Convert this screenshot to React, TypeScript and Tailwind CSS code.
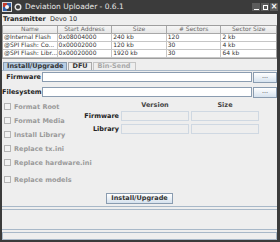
const rows = [
  ["@Internal Flash", "0x08004000", "240 kb", "120", "2 kb"],
  ["@SPI Flash: Co...", "0x00002000", "120 kb", "30", "4 kb"],
  ["@SPI Flash: Libr...", "0x00020000", "1920 kb", "30", "64 kb"],
];

const headers = ["Name", "Start Address", "Size", "# Sectors", "Sector Size"];

const options = [
  "Format Root",
  "Format Media",
  "Install Library",
  "Replace tx.ini",
  "Replace hardware.ini",
];

function Checkbox({ label }: { label: string }) {
  return (
    <div className="flex h-[14px] items-center gap-[3px] whitespace-nowrap pl-[1px]">
      <span className="h-[7px] w-[7px] shrink-0 border border-[#b4b4b4] bg-[#f2f2f2]" />
      <span className="font-bold text-[#9a9a9a]">{label}</span>
    </div>
  );
}

function Field({ disabled }: { disabled?: boolean }) {
  return disabled ? (
    <div className="h-[10px] border border-[#cfd8e2] bg-[#eeeeee]" />
  ) : (
    <div className="h-[10px] flex-1 border border-[#8a9cb0] bg-white" />
  );
}

function DotsButton() {
  return (
    <div className="flex h-[11px] w-[24px] items-center justify-center border border-[#8a9cb0] bg-gradient-to-b from-[#ffffff] to-[#d6e2ee] pb-[3px] text-[#333]">
      ...
    </div>
  );
}

export default function App() {
  return (
    <div className="flex h-[242px] w-[280px] flex-col bg-[#3b3b3b] font-['DejaVu_Sans',sans-serif] text-[6.5px] leading-none text-[#222]">
      {/* title bar */}
      <div className="flex h-[14px] items-center px-[2px]">
        <svg width="10" height="10" viewBox="0 0 10 10">
          <rect x="0" y="0" width="10" height="10" fill="#d9d9d9" />
          <rect x="1" y="1" width="4" height="4" fill="#c0392b" />
          <rect x="5" y="1" width="4" height="4" fill="#2f5fa8" />
          <rect x="1" y="5" width="4" height="4" fill="#2f5fa8" />
          <rect x="5" y="5" width="4" height="4" fill="#3a3a3a" />
          <circle cx="5" cy="5" r="2" fill="#f5f5f5" />
        </svg>
        <svg width="8" height="8" viewBox="0 0 8 8" className="ml-[2px]">
          <circle cx="4" cy="4" r="2.8" fill="none" stroke="#e6e6e6" strokeWidth="1.4" />
        </svg>
        <span className="ml-[3px] text-[7.5px] text-[#e8e8e8]">Deviation Uploader - 0.6.1</span>
        <div className="ml-auto flex gap-[1px]">
          <div className="flex h-[8px] w-[8px] items-end justify-center bg-[#5c5c5c] pb-[1px]">
            <div className="h-[1px] w-[5px] bg-white" />
          </div>
          <div className="flex h-[8px] w-[8px] items-center justify-center bg-[#5c5c5c]">
            <div className="h-[5px] w-[5px] border border-white" />
          </div>
          <div className="flex h-[8px] w-[8px] items-center justify-center bg-[#5c5c5c] text-[8px] font-bold text-white">
            ×
          </div>
        </div>
      </div>

      {/* window content */}
      <div className="ml-[2px] mr-[3px] flex h-[226px] flex-col bg-[#eeeeee]">
        <div className="flex h-[11px] items-center">
          <span className="w-[48px] pl-[1px] font-bold">Transmitter</span>
          <span className="text-[#333]">Devo 10</span>
        </div>

        {/* sectors table */}
        <div className="border border-[#9e9e9e] bg-white text-[6px]">
          <div className="grid h-[8px] grid-cols-5 bg-gradient-to-b from-[#f6f6f6] to-[#e4e4e4]">
            {headers.map((h) => (
              <div
                key={h}
                className="flex items-center justify-center border-b border-r border-[#a8a8a8] text-[#666] last:border-r-0"
              >
                {h}
              </div>
            ))}
          </div>
          {rows.map((r, i) => (
            <div key={i} className="grid h-[8px] grid-cols-5">
              {r.map((c, j) => (
                <div
                  key={j}
                  className="flex items-center overflow-hidden whitespace-nowrap border-b border-r border-[#c6c6c6] pl-[1px] text-[#333] last:border-r-0"
                >
                  {c}
                </div>
              ))}
            </div>
          ))}
        </div>

        {/* tabs */}
        <div className="mt-[3px] flex h-[8px] items-end pl-[1px]">
          <div className="flex h-[8px] items-center border border-b-0 border-[#8a9cb0] bg-[#b8cfe5] px-[3px] font-bold text-[#333]">
            Install/Upgrade
          </div>
          <div className="ml-[1px] flex h-[8px] items-center border border-b-0 border-[#a9a9a9] bg-[#eeeeee] px-[3px] font-bold text-[#333]">
            DFU
          </div>
          <div className="ml-[1px] flex h-[8px] items-center border border-b-0 border-[#c4c4c4] bg-[#eeeeee] px-[4px] font-bold text-[#a8a8a8]">
            Bin-Send
          </div>
        </div>

        {/* tab panel */}
        <div className="flex h-[138px] flex-col border-b border-t border-[#a8b8c8]">
          <div className="mt-[1px] flex h-[11px] items-center gap-[1px]">
            <span className="w-[39px] whitespace-nowrap text-right font-bold">Firmware</span>
            <Field />
            <DotsButton />
          </div>
          <div className="mt-[4px] flex h-[11px] items-center gap-[1px]">
            <span className="w-[39px] whitespace-nowrap text-right font-bold">Filesystem</span>
            <Field />
            <DotsButton />
          </div>

          <div className="mt-[2px] flex">
            <div className="flex w-[81px] shrink-0 flex-col pl-[1px]">
              {options.map((o) => (
                <Checkbox key={o} label={o} />
              ))}
              <div className="mt-[3px]">
                <Checkbox label="Replace models" />
              </div>
            </div>
            <div className="grid grid-cols-[36px_68px_68px] content-start gap-x-[2px] gap-y-[3px] pt-[2px]">
              <span />
              <span className="text-center font-bold text-[#444]">Version</span>
              <span className="text-center font-bold text-[#444]">Size</span>
              <span className="flex items-center justify-end font-bold">Firmware</span>
              <Field disabled />
              <Field disabled />
              <span className="flex items-center justify-end font-bold">Library</span>
              <Field disabled />
              <Field disabled />
            </div>
          </div>

          <div className="mt-auto mb-[2px] flex justify-center">
            <div className="flex h-[11px] w-[67px] items-center justify-center border border-[#8a9cb0] bg-gradient-to-b from-[#ffffff] to-[#d6e2ee] font-bold text-[#333]">
              Install/Upgrade
            </div>
          </div>
        </div>

        {/* log area */}
        <div className="mt-[2px] h-[21px] border-b border-t border-[#a8b8c8] bg-[#eeeeee]" />
        {/* progress bar */}
        <div className="mt-[2px] h-[8px] border border-[#a8b8c8] bg-[#eeeeee]" />
      </div>
    </div>
  );
}
